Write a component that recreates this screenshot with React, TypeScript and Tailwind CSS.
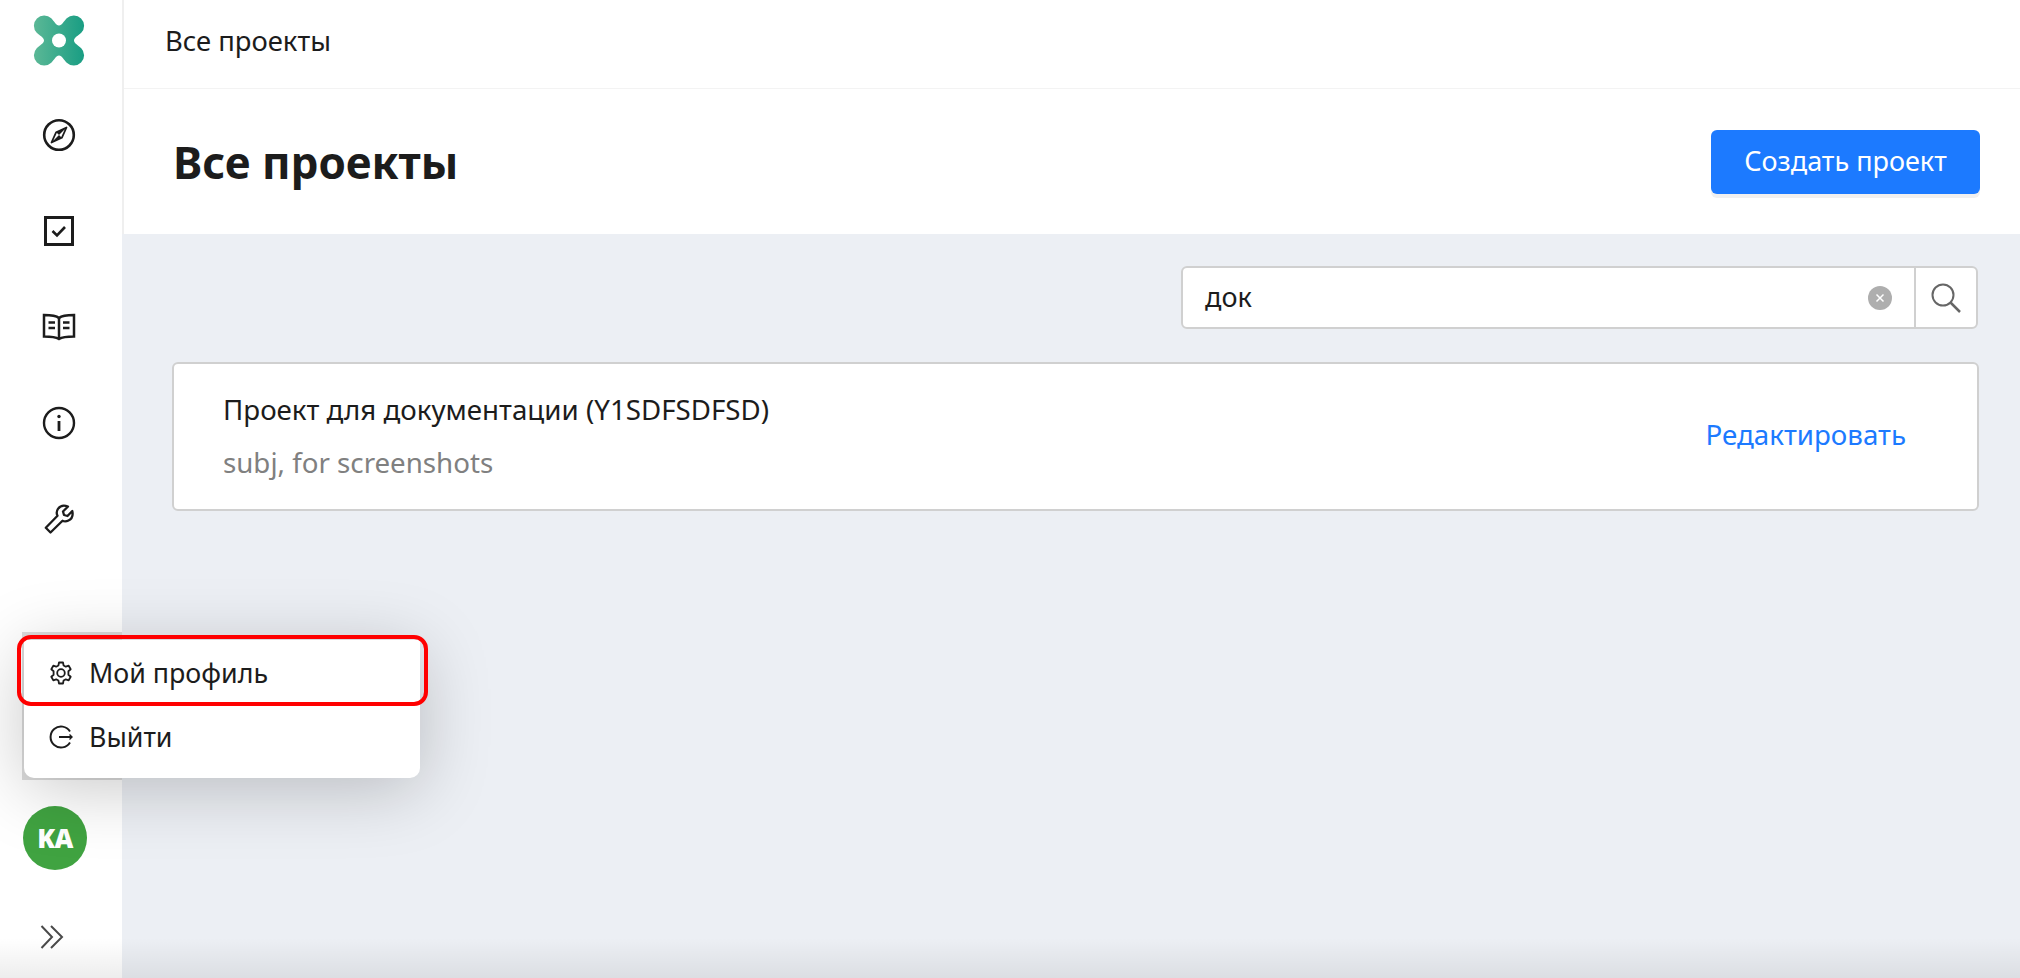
// projects page with the profile menu open

function Logo() {
  return (
    <svg width="52" height="52" viewBox="0 0 52 52">
      <defs>
        <linearGradient id="logoGrad" gradientUnits="userSpaceOnUse" x1="-26" y1="0" x2="26" y2="0">
          <stop offset="0" stopColor="#5cb896" />
          <stop offset="1" stopColor="#189d83" />
        </linearGradient>
      </defs>
      <g transform="translate(26 25.5)">
        <path
          fill="url(#logoGrad)"
          d="M0 -15C3 -15 4.720 -19.280 7.720 -22.280A10.300 10.300 0 0 1 22.280 -7.720C19.280 -4.720 15 -3 15 0C15 3 19.280 4.720 22.280 7.720A10.300 10.300 0 0 1 7.720 22.280C4.720 19.280 3 15 0 15C-3 15 -4.720 19.280 -7.720 22.280A10.300 10.300 0 0 1 -22.280 7.720C-19.280 4.720 -15 3 -15 0C-15 -3 -19.280 -4.720 -22.280 -7.720A10.300 10.300 0 0 1 -7.720 -22.280C-4.720 -19.280 -3 -15 0 -15Z"
        />
        <circle r="7" fill="#fff" />
      </g>
    </svg>
  );
}

function CompassIcon() {
  return (
    <svg width="34" height="34" viewBox="0 0 34 34" fill="none" stroke="#1c1c1c" strokeWidth="2.600">
      <circle cx="17" cy="17" r="14.800" />
      <path d="M24.500 9.500L19.800 19.800L9.500 24.500L14.200 14.200Z" strokeWidth="1.800" strokeLinejoin="round" />
      <path d="M24.500 9.500L14.200 14.200L17 17Z" fill="#1c1c1c" stroke="none" />
      <path d="M9.500 24.500L19.800 19.800L17 17Z" fill="#1c1c1c" stroke="none" />
    </svg>
  );
}

function CheckIcon() {
  return (
    <svg width="30" height="30" viewBox="0 0 30 30" fill="none" stroke="#1c1c1c">
      <rect x="1.500" y="1.500" width="27" height="27" strokeWidth="3" />
      <path d="M8.500 15L13 19.500L21 11" strokeWidth="2.600" />
    </svg>
  );
}

function BookIcon() {
  return (
    <svg width="34" height="28" viewBox="0 0 34 28" fill="none" stroke="#1c1c1c" strokeWidth="2.500">
      <path d="M17 5C14 2.500 8 2 2 2V23.500C8 23.500 13 23.500 17 26C21 23.500 26 23.500 32 23.500V2C26 2 20 2.500 17 5Z" />
      <path d="M17 5V26" />
      <path d="M6.500 9.500H13M6.500 15H13M21 9.500H27.500M21 15H27.500" strokeWidth="2.400" />
    </svg>
  );
}

function InfoIcon() {
  return (
    <svg width="34" height="34" viewBox="0 0 34 34" fill="none" stroke="#1c1c1c" strokeWidth="2.400">
      <circle cx="17" cy="17" r="15" />
      <path d="M17 15V25" strokeWidth="2.800" />
      <circle cx="17" cy="10.500" r="1.700" fill="#1c1c1c" stroke="none" />
    </svg>
  );
}

function WrenchIcon() {
  return (
    <svg width="30" height="30" viewBox="0 0 30 30" fill="none" stroke="#1c1c1c" strokeWidth="2.300" strokeLinejoin="round">
      <path d="M24 2.500L19 7.500L20 11L23.500 12L28.300 7C29.300 11.500 27.500 15 24.500 16.500C22.500 17.500 20 17.500 18.500 16.700L6.500 28.500L1.800 23.800L13.500 11.800C12.500 9.800 12.500 7 14 4.800C16 2 20 1 24 2.500Z" />
    </svg>
  );
}

function GearIcon() {
  return (
    <svg width="24" height="24" viewBox="0 0 24 24" fill="none" stroke="#1c1c1c" strokeWidth="1.800" strokeLinejoin="round">
      <path d="M10 1.500H14L14.600 4.500L16.800 5.700L19.700 4.700L21.700 8.200L19.400 10.200V13.800L21.700 15.800L19.700 19.300L16.800 18.300L14.600 19.500L14 22.500H10L9.400 19.500L7.200 18.300L4.300 19.300L2.300 15.800L4.600 13.800V10.200L2.300 8.200L4.300 4.700L7.200 5.700L9.400 4.500Z" />
      <circle cx="12" cy="12" r="3.800" />
    </svg>
  );
}

function LogoutIcon() {
  return (
    <svg width="24" height="24" viewBox="0 0 24 24" fill="none" stroke="#1c1c1c" strokeWidth="2">
      <path d="M21 6.500A10.500 10.500 0 1 0 21 17.500" />
      <path d="M10 12H23" />
      <path d="M20.500 9.500L23 12L20.500 14.500" strokeWidth="1.400" />
    </svg>
  );
}

function NavItem({ children }: { children: React.ReactNode }) {
  return <div className="w-[118px] h-[96px] flex items-center justify-center">{children}</div>;
}

export default function App() {
  return (
    <div className="relative h-screen flex overflow-hidden bg-[#eceff4] text-[#1c1c1c] font-['Noto_Sans',sans-serif]">
      {/* sidebar */}
      <aside className="w-[122px] shrink-0 bg-white flex flex-col">
        <div className="w-[118px] h-[87px] flex items-center justify-center pb-[5px]">
          <Logo />
        </div>
        <NavItem><CompassIcon /></NavItem>
        <NavItem><CheckIcon /></NavItem>
        <NavItem><BookIcon /></NavItem>
        <NavItem><InfoIcon /></NavItem>
        <NavItem><WrenchIcon /></NavItem>
        <div className="mt-auto pl-[23px] pb-[29px]">
          <div className="w-[64px] h-[64px] rounded-full bg-[#40a341] flex items-center justify-center text-white text-[26px] font-black tracking-[-0.5px]">
            KA
          </div>
          <svg className="mt-[55px] ml-[17px]" width="24" height="24" viewBox="0 0 24 24" fill="none" stroke="#4a4a4a" strokeWidth="2">
            <path d="M1.500 1L12 12L1.500 23M11 1L22 12L11 23" />
          </svg>
        </div>
      </aside>

      {/* main */}
      <main className="flex-1 flex flex-col">
        <div className="bg-white border-l-2 border-[#efefef]">
          <div className="h-[89px] flex items-center pl-[41px] pb-[6px] border-b border-[#f3f3f3] text-[27.4px]">
            Все проекты
          </div>
          <div className="h-[145px] flex items-center justify-between pl-[49px] pr-[40px]">
            <h1 className="text-[44px] font-bold leading-[56px]">Все проекты</h1>
            <button className="w-[269px] h-[64px] rounded-[6px] bg-[#1c7aff] text-white text-[27px] shadow-[0_4px_0_#f0f0f0]">
              Создать проект
            </button>
          </div>
        </div>

        <div className="pt-[32px] pl-[50px] pr-[41px]">
          <div className="flex justify-end pr-[1px]">
            <div className="w-[797px] h-[63px] flex rounded-[6px] bg-white border-2 border-[#d0d0d0]">
              <div className="flex-1 flex items-center justify-between pl-[22px] pr-[22px] text-[27px]">
                <span>док</span>
                <span className="w-[24px] h-[24px] rounded-full bg-[#aeaeae] text-white flex items-center justify-center">
                  <svg width="10" height="10" viewBox="0 0 10 10" stroke="#fff" strokeWidth="1.500">
                    <path d="M1.500 1.500L8.500 8.500M8.500 1.500L1.500 8.500" />
                  </svg>
                </span>
              </div>
              <div className="w-[62px] border-l-2 border-[#d0d0d0] flex items-center justify-center">
                <svg width="32" height="32" viewBox="0 0 32 32" fill="none" stroke="#666" strokeWidth="2">
                  <circle cx="13" cy="13" r="10.500" />
                  <path d="M20.500 20.500L30 30" strokeWidth="2.500" />
                </svg>
              </div>
            </div>
          </div>

          <div className="mt-[33px] h-[149px] flex items-center justify-between rounded-[6px] bg-white border-2 border-[#d0d0d0] pl-[49px] pr-[71px]">
            <div className="pb-[3px]">
              <div className="text-[27.7px] leading-[36px]">Проект для документации (Y1SDFSDFSD)</div>
              <div className="mt-[17px] text-[27.7px] leading-[36px] text-[#808080]">subj, for screenshots</div>
            </div>
            <a className="text-[#1c7aff] text-[27.7px] pb-[3px]">Редактировать</a>
          </div>
        </div>
      </main>

      {/* bottom fade */}
      <div className="absolute left-0 right-0 bottom-0 h-[40px] pointer-events-none bg-gradient-to-t from-[#00000012] to-transparent"></div>

      {/* profile menu */}
      <div className="absolute left-[22px] top-[632px] w-[100px] h-[148px] bg-[#dcdcdc]"></div>
      <div className="absolute left-[24px] top-[640px] w-[396px] rounded-b-[10px] bg-white shadow-[0_10px_70px_rgba(0,0,0,0.22)] pb-[10px] text-[26.8px]">
        <div className="relative h-[66px] flex items-center gap-[16px] pl-[25px]">
          <GearIcon />
          <span>Мой профиль</span>
          <div className="absolute -left-[7px] -right-[8px] -top-[5px] bottom-0 rounded-[14px] border-[4px] border-[#ff0000]"></div>
        </div>
        <div className="h-[62px] flex items-center gap-[16px] pl-[25px]">
          <LogoutIcon />
          <span>Выйти</span>
        </div>
      </div>
    </div>
  );
}
